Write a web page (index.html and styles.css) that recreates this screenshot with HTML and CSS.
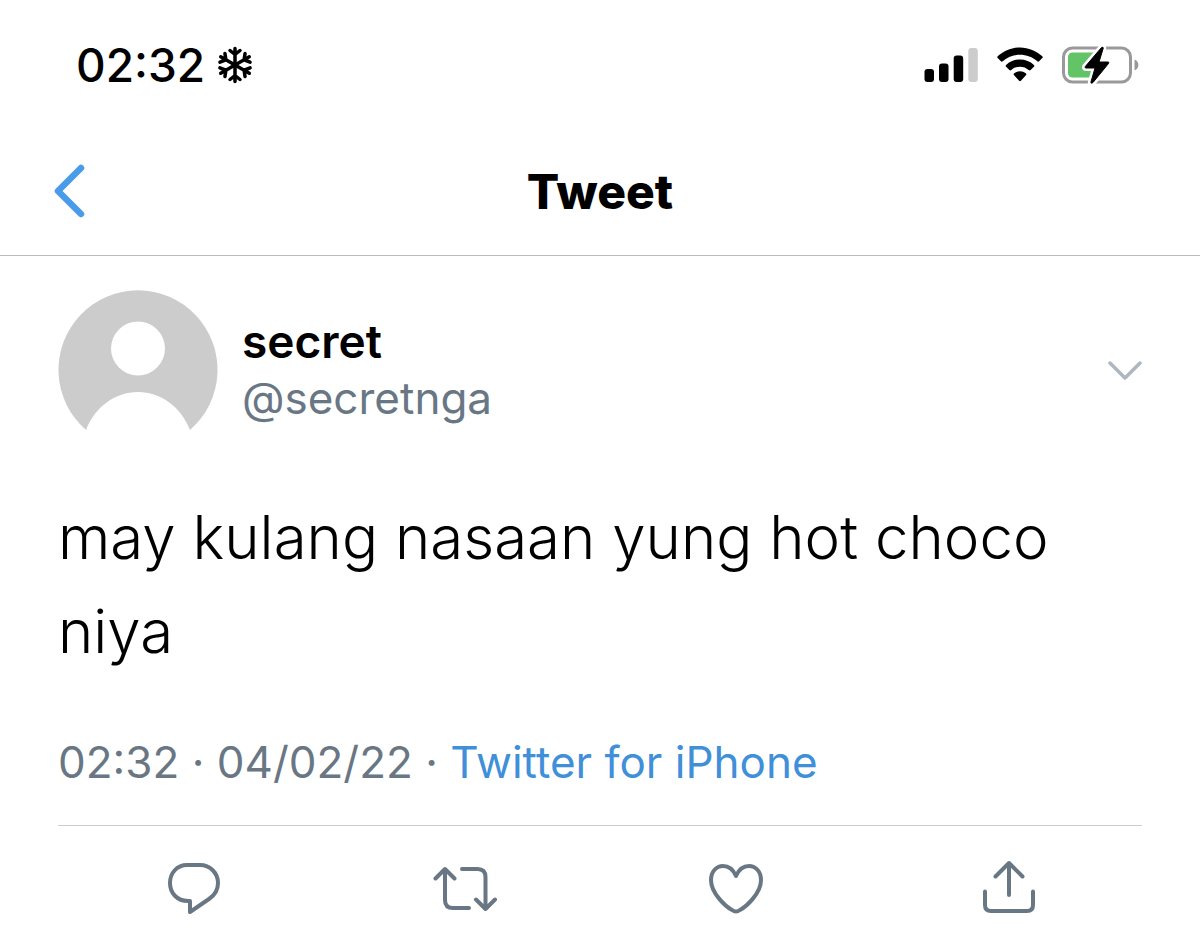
FILE: index.html
```html
<!DOCTYPE html>
<html lang="tl">
<head>
  <meta charset="UTF-8" />
  <meta name="viewport" content="width=device-width, initial-scale=1.0"/>
  <title>Tweet</title>
  <link rel="stylesheet" href="styles.css">
</head>
<body>
  <div class="status-bar">
    <div class="clock">
      <span>02:32</span>
      <svg width="36" height="38" viewBox="-18 -19 36 38" fill="none" stroke="#000" stroke-width="3.5" stroke-linecap="round" stroke-linejoin="round" aria-hidden="true">
        <defs>
          <path id="arm" d="M0 0V-16.500M-5 -14.500L0 -10.500L5 -14.500"/>
        </defs>
        <use href="#arm"/>
        <use href="#arm" transform="rotate(60)"/>
        <use href="#arm" transform="rotate(120)"/>
        <use href="#arm" transform="rotate(180)"/>
        <use href="#arm" transform="rotate(240)"/>
        <use href="#arm" transform="rotate(300)"/>
      </svg>
    </div>
    <div class="indicators">
      <svg width="54" height="36" viewBox="0 0 54 36" aria-hidden="true">
        <rect x="0.5" y="22" width="9.5" height="13" rx="3"/>
        <rect x="15" y="16.5" width="9.5" height="18.5" rx="3"/>
        <rect x="29.7" y="8.5" width="9.5" height="26.5" rx="3"/>
        <rect x="44.3" y="1" width="9.5" height="34" rx="3" fill="#ccc"/>
      </svg>
      <svg width="46" height="36" viewBox="0 0 46 36" aria-hidden="true">
        <path d="M23 0.5C31.5 0.5 39.5 4 45.3 9.3Q46.2 10.2 45.3 11.1L42.1 14.3Q41.2 15.2 40.3 14.3C35.5 10 29.5 7.7 23 7.7S10.5 10 5.7 14.3Q4.8 15.2 3.9 14.3L0.7 11.1Q-0.2 10.2 0.7 9.3C6.5 4 14.5 0.5 23 0.5Z"/>
        <path d="M23 12.5C28.4 12.5 33.2 14.5 36.9 17.9Q37.8 18.8 36.9 19.7L33.6 23Q32.7 23.9 31.7 23C29.3 20.9 26.3 19.7 23 19.7S16.7 20.9 14.3 23Q13.3 23.9 12.4 23L9.1 19.7Q8.2 18.8 9.1 17.9C12.8 14.5 17.6 12.5 23 12.5Z"/>
        <path d="M23 24.3C25.2 24.3 27.2 25.1 28.8 26.3Q29.9 27.2 28.9 28.2L23.9 33.8Q23 34.7 22.1 33.8L17.1 28.2Q16.1 27.2 17.2 26.3C18.8 25.1 20.8 24.3 23 24.3Z"/>
      </svg>
      <svg width="77" height="38" viewBox="0 0 77 38" aria-hidden="true">
        <rect x="1.5" y="2" width="67" height="34" rx="9" fill="none" stroke="#999" stroke-width="3"/>
        <path d="M72.5 13.5C77.7 15.2 77.7 22.8 72.5 24.5Z" fill="#999"/>
        <rect x="6" y="6.5" width="30" height="25" rx="4.5" fill="#62c466"/>
        <path id="bolt" d="M39.5 1.5L23.3 20.5Q22.5 22 24 22H33L28.8 36.5Q29.5 38 31 36.5L46.5 17.5Q47.5 16 46 16H37L41.3 2Q41 0.5 39.5 1.5Z" stroke="#fff" stroke-width="6" stroke-linejoin="round"/>
        <path d="M39.5 1.5L23.3 20.5Q22.5 22 24 22H33L28.8 36.5Q29.5 38 31 36.5L46.5 17.5Q47.5 16 46 16H37L41.3 2Q41 0.5 39.5 1.5Z" stroke="#000" stroke-width="1"/>
      </svg>
    </div>
  </div>

  <header class="top-nav">
    <button class="back" aria-label="Back">
      <svg width="32" height="54" viewBox="0 0 32 54" fill="none" stroke="#4a9bea" stroke-width="6.5" stroke-linecap="round" stroke-linejoin="round">
        <path d="M27 4L4 27L27 50"/>
      </svg>
    </button>
    <h1>Tweet</h1>
  </header>

  <main class="tweet">
    <div class="author">
      <svg class="avatar" width="160" height="160" viewBox="0 0 160 160" aria-hidden="true">
        <path fill="#ccc" d="M28 140A79.5 79.5 0 1 1 132 140C123 117 103 102 80 102S37 117 28 140Z"/>
        <circle cx="80" cy="58.5" r="27" fill="#fff"/>
      </svg>
      <div class="names">
        <strong>secret</strong>
        <a href="#">@secretnga</a>
      </div>
      <button class="more" aria-label="More">
        <svg width="36" height="24" viewBox="0 0 36 24" fill="none" stroke="#b0b6bf" stroke-width="3.5" stroke-linecap="round" stroke-linejoin="round">
          <path d="M4 5L19 20L34 5"/>
        </svg>
      </button>
    </div>

    <p class="tweet-text">may kulang nasaan yung hot choco niya</p>

    <p class="meta">02:32 · 04/02/22 · <a href="#">Twitter for iPhone</a></p>

    <div class="actions">
      <button aria-label="Reply">
        <svg width="64" height="64" viewBox="0 0 64 64">
          <path d="M25 8H38C48 8 56 16 56 26C56 33 53 38 47 42L28 55V44H26C15 44 8 36 8 26S15 8 25 8Z"/>
        </svg>
      </button>
      <button aria-label="Retweet">
        <svg width="64" height="64" viewBox="0 0 64 64">
          <path d="M2.5 21.5L12 12L21.5 21.5M12 12V43Q12 51 20 51H36M29 12H44.5Q52.5 12 52.5 20V52M43 42.5L52.5 52L62 42.5"/>
        </svg>
      </button>
      <button aria-label="Like">
        <svg width="64" height="64" viewBox="0 0 64 64">
          <path d="M32 19C29 12 24 9 19 9C12 9 7 15 7 23C7 36 21 49 28 53Q32 56 36 53C43 49 57 36 57 23C57 15 52 9 45 9C40 9 35 12 32 19Z"/>
        </svg>
      </button>
      <button aria-label="Share">
        <svg width="64" height="64" viewBox="0 0 64 64">
          <path d="M20.5 19.5L34 6L47.5 19.5M34 6V38M10 34.5V48Q10 54 16 54H52Q58 54 58 48V34.5"/>
        </svg>
      </button>
    </div>
  </main>
</body>
</html>
```

FILE: styles.css
```css
/* General Styles */
* {
  box-sizing: border-box;
}

body {
  font-family: Inter, "Liberation Sans", sans-serif;
  font-size: 46px;
  margin: 0;
  background-color: #fff;
  color: #000;
}

svg {
  display: block;
}

button {
  border: none;
  padding: 0;
  background: none;
  cursor: pointer;
}

a {
  text-decoration: none;
}

/* Status Bar */
.status-bar {
  display: flex;
  justify-content: space-between;
  align-items: center;
  height: 130px;
  padding: 0 61px 0 76px;
}

.clock {
  display: flex;
  align-items: center;
  gap: 12px;
  font-weight: 500;
}

.indicators {
  display: flex;
  align-items: center;
  gap: 19px;
}

/* Navigation */
.top-nav {
  display: grid;
  grid-template-columns: 1fr auto 1fr;
  align-items: center;
  height: 126px;
  padding: 0 54px 3px;
  border-bottom: 1px solid #bbb;
}

.back {
  justify-self: start;
}

.top-nav h1 {
  margin: 0;
  font-size: 48px;
  font-weight: 800;
}

/* Tweet */
.tweet {
  padding: 34px 58px 0;
}

.author {
  display: flex;
  align-items: center;
  gap: 24px;
}

.names {
  flex: 1;
  display: flex;
  flex-direction: column;
  line-height: 57px;
}

.names strong {
  font-weight: 600;
}

.names a {
  font-size: 44px;
  color: #697785;
}

.tweet-text {
  margin: 40px 0 54px;
  font-size: 60px;
  font-weight: 300;
  line-height: 94px;
}

.meta {
  margin: 0;
  padding-bottom: 33px;
  font-size: 44px;
  line-height: 60px;
  color: #697785;
  border-bottom: 1px solid #ccc;
}

.meta a {
  color: #3f8fd9;
}

/* Action Buttons */
.actions {
  display: grid;
  grid-template-columns: repeat(4, 1fr);
  justify-items: center;
  padding: 31px 0 28px;
}

.actions svg {
  fill: none;
  stroke: #697785;
  stroke-width: 4;
  stroke-linecap: round;
  stroke-linejoin: round;
}
```
